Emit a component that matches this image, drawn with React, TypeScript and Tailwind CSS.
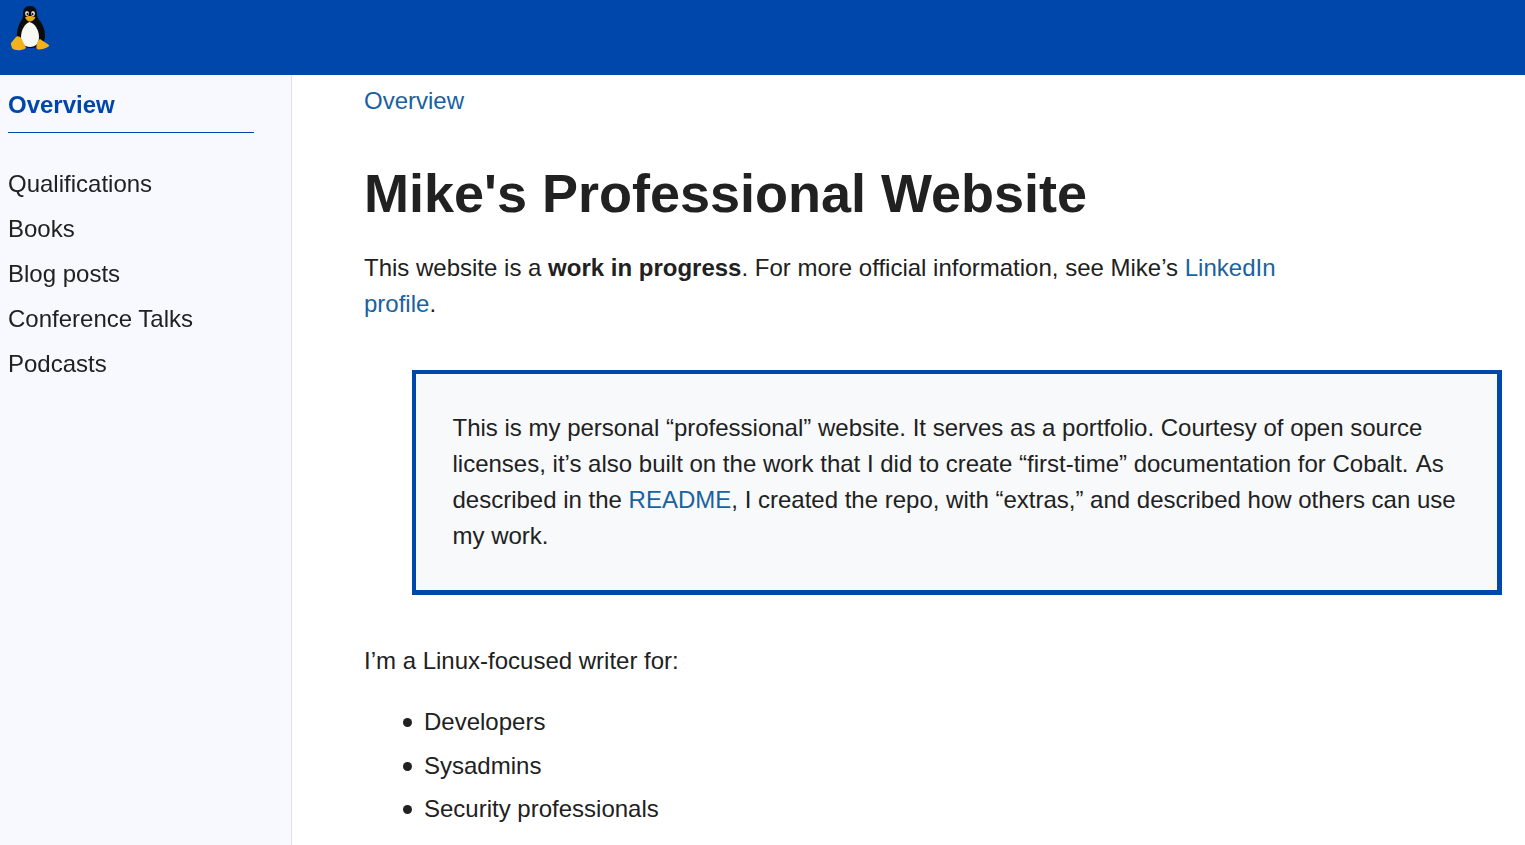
const navItems = ["Qualifications", "Books", "Blog posts", "Conference Talks", "Podcasts"];

function Tux() {
  return (
    <svg viewBox="0 0 42 48" className="h-[48px] w-[42px]">
      <path d="M21 1c-5 0-7 3-7 8 0 3-.5 5-2 7-2.500 4-4.500 10-4 16 .5 7 6 11 14 11s13.500-4 14-11c.5-6-2-12-5-16-1.500-2-3-4-3-7 0-5-2-8-7-8z" fill="#0c0c0e" />
      <path d="M20.500 17c-4.500 1.500-8.500 8-8.500 15 0 6.500 3.500 10 9 10s9-3.500 9-10c0-7-4.500-14-9.500-15z" fill="#f8f8f4" />
      <ellipse cx="18" cy="8.500" rx="2" ry="2.500" fill="#d9d9d9" />
      <ellipse cx="24" cy="8.500" rx="2" ry="2.500" fill="#d9d9d9" />
      <circle cx="18.500" cy="9" r="1" fill="#111" />
      <circle cx="23.500" cy="9" r="1" fill="#111" />
      <path d="M16 12.500c3-1.800 7-2 10.500 0-1.500 2.500-3.500 4-5.500 4s-3.500-1.500-5-4z" fill="#e8a81c" />
      <path d="M7 32 2 38c-.5 1 .5 3 1 5 1 2 6 2.500 9 2 2.500-.5 4-1 5-2.500L12 33c-1-1.500-3.500-2.500-5-1z" fill="#f2b21e" />
      <path d="M31 34l9 6c.5 1-.5 1.500-2 2.500-3 1-5 2-8 2-2.500 0-3-2-2.500-4s1-5 3.500-6.500z" fill="#f2b21e" />
    </svg>
  );
}

export default function App() {
  return (
    <div className="flex h-[845px] flex-col overflow-hidden bg-white font-['Liberation_Sans',Arial,sans-serif] text-[24px] text-[#212121]">
      <header className="h-[75px] shrink-0 bg-[#0047ab] pl-[9px] pt-[5px]">
        <Tux />
      </header>
      <div className="flex min-h-0 flex-1">
        <aside className="w-[292px] shrink-0 border-r border-[#dfe1e5] bg-[#f8f9fe] pl-2">
          <nav className="will-change-transform">
            <div className="w-[246px] border-b border-[#0047ab] pb-[12px] pt-[14px] font-bold leading-[31px] text-[#0047ab]">
              Overview
            </div>
            <ul className="mt-[28px] flex flex-col">
              {navItems.map((item) => (
                <li key={item} className="h-[45px] leading-[45px]">
                  {item}
                </li>
              ))}
            </ul>
          </nav>
        </aside>
        <main className="min-w-0 flex-1 pl-[72px] pr-[23px]">
          <a className="mt-[9px] block leading-[34px] text-[#1a629e]">Overview</a>
          <h1 className="mt-[40px] text-[54px] font-bold leading-[70px]">Mike's Professional Website</h1>
          <p className="mt-[22px] max-w-[960px] leading-[36px]">
            This website is a <strong>work in progress</strong>. For more official information, see Mike’s{" "}
            <a className="text-[#1a629e]">LinkedIn profile</a>.
          </p>
          <div className="ml-[48px] mt-[48px] border-4 border-b-[5px] border-r-[5px] border-[#0047ab] bg-[#f7f9fb] py-[36px] pl-[36.5px] pr-[35px] leading-[36px]">
            This is my personal “professional” website. It serves as a portfolio. Courtesy of open source licenses, it’s
            also built on the work that I did to create “first-time” documentation for Cobalt.{" "}
            <span className="ml-[0.5px]">As</span> described in the <a className="text-[#1a629e]">README</a>, I created
            the repo, with “extras,” and described how others can use my work.
          </div>
          <p className="mt-[48px] leading-[36px]">I’m a Linux-focused writer for:</p>
          <ul className="mt-[25px] flex flex-col pl-[39px] leading-[36px]">
            <li className="mb-[8px] flex items-center gap-[12px]">
              <span className="size-[9px] rounded-full bg-[#212121]" />
              Developers
            </li>
            <li className="mb-[7px] flex items-center gap-[12px]">
              <span className="size-[9px] rounded-full bg-[#212121]" />
              Sysadmins
            </li>
            <li className="flex items-center gap-[12px]">
              <span className="size-[9px] rounded-full bg-[#212121]" />
              Security professionals
            </li>
          </ul>
        </main>
      </div>
    </div>
  );
}
